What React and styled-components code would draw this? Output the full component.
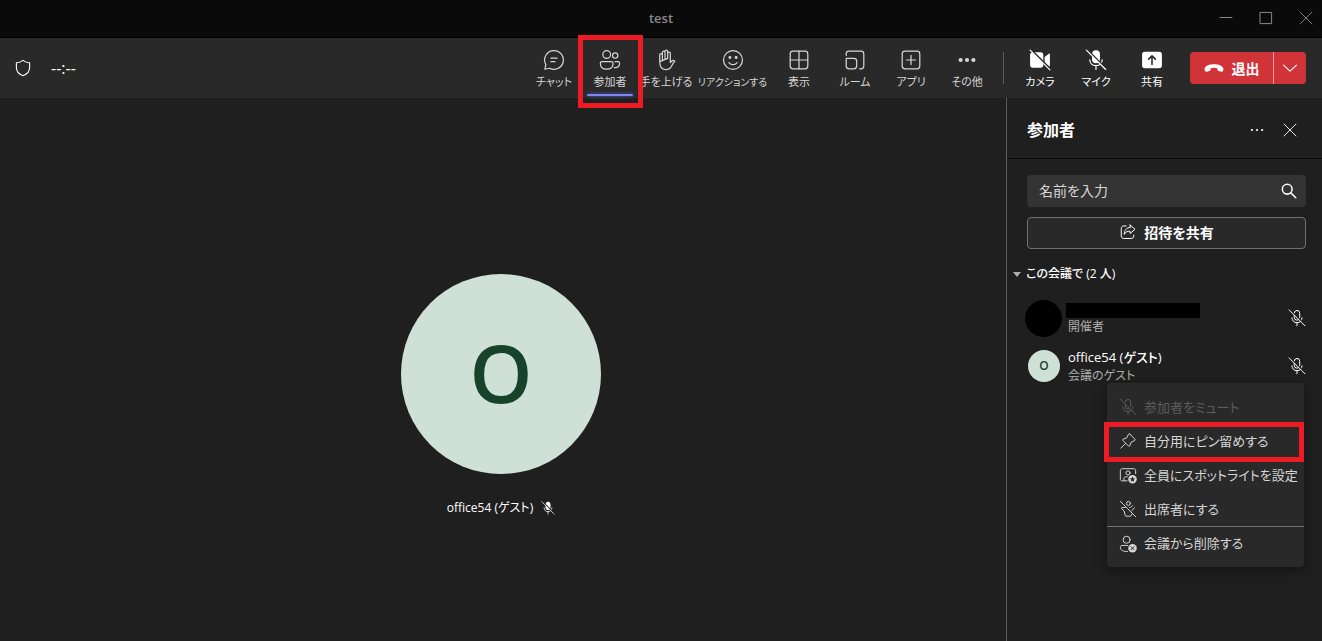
import React, { useState } from "react";
import styled, { createGlobalStyle } from "styled-components";

const GlobalStyle = createGlobalStyle`
  * {
    box-sizing: border-box;
  }

  body {
    margin: 0;
    background: #1f1f1f;
    color: #fff;
    font-family: "Open Sans", "Noto Sans CJK JP", sans-serif;
    font-feature-settings: "palt";
  }

  button,
  input {
    font: inherit;
    font-feature-settings: inherit;
    color: inherit;
  }

  button {
    padding: 0;
    border: none;
    background: none;
    cursor: pointer;
  }
`;

const Icon = ({ size = 20, children }) => (
  <svg
    width={size}
    height={size}
    viewBox="0 0 20 20"
    fill="none"
    stroke="currentColor"
    strokeWidth="1.1"
    strokeLinecap="round"
    strokeLinejoin="round"
    aria-hidden="true"
  >
    {children}
  </svg>
);

const ShieldIcon = () => (
  <Icon>
    <path d="M10 2.4C12 4 14.200 4.700 16.600 4.800V9.500C16.600 13.500 14.200 16.200 10 17.700C5.800 16.200 3.400 13.500 3.400 9.500V4.800C5.800 4.700 8 4 10 2.400Z" />
  </Icon>
);

const ChatIcon = () => (
  <Icon size={22}>
    <path d="M10 1.500A8.500 8.500 0 1 1 6 17.500L1.700 18.400L2.600 14.200A8.500 8.500 0 0 1 10 1.500Z" />
    <path d="M7.200 8.300H12.800M7.200 11.500H10.800" />
  </Icon>
);

const PeopleIcon = () => (
  <Icon size={22}>
    <circle cx="7" cy="5" r="3.500" />
    <circle cx="14.700" cy="6" r="2.400" />
    <path d="M2.700 11.400H11.300C12.200 11.400 12.800 12 12.800 12.900C12.800 16.500 10.500 18.300 7 18.300S1.200 16.500 1.200 12.900C1.200 12 1.800 11.400 2.700 11.400Z" />
    <path d="M14.600 11.400H17.200C18.100 11.400 18.700 12 18.700 12.900C18.700 15.700 16.900 17.300 13.900 16.900" />
  </Icon>
);

const HandIcon = () => (
  <Icon size={22}>
    <path d="M4.300 11.500V5.400A1.200 1.200 0 0 1 6.700 5.400V9.500M6.700 9V3.200A1.200 1.200 0 0 1 9.100 3.200V8.800M9.100 8.500V2.300A1.200 1.200 0 0 1 11.500 2.300V8.800M11.500 8.500V4A1.200 1.200 0 0 1 13.900 4V12.300L15.600 10.700C16.500 9.900 17.500 10.300 18 11.100C15.900 13.100 15.500 15.200 14.100 17C13.300 18.100 12.100 18.800 10.200 18.800C6 18.800 4.300 16.200 4.300 11.500Z" />
  </Icon>
);

const SmileIcon = () => (
  <Icon size={22}>
    <circle cx="10" cy="10" r="8.600" />
    <circle cx="7.200" cy="7.800" r=".8" fill="currentColor" />
    <circle cx="12.800" cy="7.800" r=".8" fill="currentColor" />
    <path d="M6.300 12.300C7.300 13.600 8.500 14.200 10 14.200S12.700 13.600 13.700 12.300" />
  </Icon>
);

const GridIcon = () => (
  <Icon size={22}>
    <rect x="2" y="2" width="16" height="16" rx="2.500" />
    <path d="M10 2V18M2 10H18" />
  </Icon>
);

const RoomsIcon = () => (
  <Icon size={22}>
    <path d="M2 5.800V4.500C2 3 3 2 4.500 2H15.500C17 2 18 3 18 4.500V15.500C18 17 17 18 15.500 18H14.200" />
    <path d="M2 8.500H9C10.500 8.500 11.500 9.500 11.500 11V15.500C11.500 17 10.500 18 9 18H4.500C3 18 2 17 2 15.500V8.500Z" />
  </Icon>
);

const AppsIcon = () => (
  <Icon size={22}>
    <rect x="2" y="2" width="16" height="16" rx="2.500" />
    <path d="M10 5.800V14.200M5.800 10H14.200" />
  </Icon>
);

const MoreIcon = ({ size = 22, r = 1.9, gap = 5.8 }) => (
  <Icon size={size}>
    <g fill="currentColor" stroke="none">
      <circle cx={10 - gap} cy="10" r={r} />
      <circle cx="10" cy="10" r={r} />
      <circle cx={10 + gap} cy="10" r={r} />
    </g>
  </Icon>
);

const CameraOffIcon = () => (
  <Icon size={22}>
    <g fill="currentColor" stroke="none">
      <path d="M3.500 3H10.500C12 3 13 4 13 5.500V14.500C13 16 12 17 10.500 17H3.500C2 17 1 16 1 14.500V5.500C1 4 2 3 3.500 3Z" />
      <path d="M14.200 7.200L18 4.300C18.500 4 19 4.200 19 4.800V15.200C19 15.800 18.500 16 18 15.700L14.200 12.800Z" />
    </g>
    <path d="M1.600 .6L19.400 18.400" stroke="#292929" strokeWidth="2" />
    <path d="M1 1L19 19" />
  </Icon>
);

const MicOffIcon = ({ size = 22, filled, cut = "#292929" }) => (
  <Icon size={size}>
    <rect x="7" y="1.600" width="6" height="10.800" rx="3" fill={filled ? "currentColor" : "none"} />
    <path d="M4.400 9.800C4.400 13 6.700 15.200 10 15.200S15.600 13 15.600 9.800M10 15.200V18.600" />
    <path d="M2 .6L19.400 18" stroke={cut} strokeWidth="1.600" />
    <path d="M1.200 1L18.800 18.600" />
  </Icon>
);

const ShareScreenIcon = () => (
  <Icon size={22}>
    <rect x="1" y="2.500" width="18" height="15" rx="2.500" fill="currentColor" stroke="none" />
    <path d="M10 14V6.200M6.900 9.200L10 6.100L13.100 9.200" stroke="#292929" strokeWidth="1.400" />
  </Icon>
);

const HangUpIcon = () => (
  <Icon>
    <path
      d="M10 6.300C14.500 6.300 18.200 7.600 19.200 10.100C19.700 11.400 19.400 12.500 18.800 13.300C18.500 13.700 18.100 13.800 17.600 13.700L14.600 13.100C14 13 13.700 12.600 13.600 12L13.200 10.200C11.200 9.500 8.800 9.500 6.800 10.200L6.400 12C6.300 12.600 6 13 5.400 13.100L2.400 13.700C1.900 13.800 1.500 13.700 1.200 13.300C.6 12.500 .3 11.400 .8 10.100C1.800 7.600 5.500 6.300 10 6.300Z"
      fill="currentColor"
      stroke="none"
    />
  </Icon>
);

const ChevronDownIcon = () => (
  <Icon size={16}>
    <path d="M2 6.500L10 14L18 6.500" strokeWidth="1.400" />
  </Icon>
);

const CloseIcon = ({ size = 14 }) => (
  <Icon size={size}>
    <path d="M1.500 1.500L18.500 18.500M18.500 1.500L1.500 18.500" strokeWidth="1.300" />
  </Icon>
);

const MinimizeIcon = () => (
  <Icon size={14}>
    <path d="M1.500 9.300H18.500" strokeWidth="1.400" />
  </Icon>
);

const MaximizeIcon = () => (
  <Icon size={14}>
    <rect x="2" y="2" width="16" height="16" strokeWidth="1.400" />
  </Icon>
);

const SearchIcon = () => (
  <Icon size={16}>
    <circle cx="7.800" cy="7.800" r="6.100" strokeWidth="1.900" />
    <path d="M12.300 12.300L18.500 18.500" strokeWidth="1.900" />
  </Icon>
);

const InviteIcon = () => (
  <Icon size={18}>
    <path d="M8 3.300H5.200C3.700 3.300 2.500 4.500 2.500 6V14.500C2.500 16 3.700 17.200 5.200 17.200H13.700C15.200 17.200 16.400 16 16.400 14.500V13.500" />
    <path d="M12.300 2.200L17.800 7L12.300 11.700V9.100C9.300 9 7.300 10.100 5.800 12.600C6 8.200 8.200 5.300 12.300 4.900Z" />
  </Icon>
);

const PinIcon = () => (
  <Icon size={18}>
    <path d="M12.200 2.500L17.500 7.800C18.100 8.400 17.900 9.300 17.200 9.600L13.400 11.500L12.100 15.300C11.900 16 11.100 16.100 10.600 15.600L4.400 9.400C3.900 8.900 4.100 8.100 4.700 7.900L8.500 6.600L10.400 2.800C10.700 2.100 11.600 1.900 12.200 2.500Z" />
    <path d="M7.300 12.700L2 18" />
  </Icon>
);

const SpotlightIcon = () => (
  <Icon size={18}>
    <path d="M9 16.500H3.500C2.300 16.500 1.500 15.700 1.500 14.500V5C1.500 3.800 2.300 3 3.500 3H16.500C17.700 3 18.500 3.800 18.500 5V8.500" />
    <circle cx="10" cy="7.700" r="2.300" />
    <path d="M5.500 16.300V13.700C5.500 12.700 6.200 12 7.200 12H9.200" />
    <circle cx="15" cy="14.700" r="4.700" fill="currentColor" stroke="none" />
    <path
      d="M15 11.700L15.900 13.700L18 13.900L16.400 15.300L16.900 17.400L15 16.300L13.100 17.400L13.600 15.300L12 13.900L14.100 13.700Z"
      fill="#292929"
      stroke="none"
    />
  </Icon>
);

const AttendeeIcon = () => (
  <Icon size={18}>
    <circle cx="10.500" cy="3.800" r="2.200" />
    <path d="M1.500 1.500L18.500 18.500" />
    <path d="M6.800 8.300H3.500C2.800 8.300 2.400 9.300 3 9.800L5.700 12.200L7 17.300C7.100 17.700 7.400 18 7.900 18H12.800C13.300 18 13.600 17.700 13.700 17.300L14.100 15.800M11.800 8.500C12.600 8.500 13.300 8.100 13.900 7.500L15.200 6.200M14.200 11.800L17.400 8.700" />
  </Icon>
);

const RemoveIcon = () => (
  <Icon size={18}>
    <circle cx="8.500" cy="5.300" r="3.900" />
    <path d="M9.500 18.300C4.600 18.700 1.500 16.800 1.500 13.500C1.500 12.300 2.300 11.600 3.300 11.600H9.500" />
    <circle cx="15" cy="14.700" r="4.700" fill="currentColor" stroke="none" />
    <path d="M13.300 13L16.700 16.400M16.700 13L13.300 16.400" stroke="#292929" />
  </Icon>
);

const tools = [
  { label: "チャット", icon: <ChatIcon /> },
  { label: "参加者", icon: <PeopleIcon />, active: true },
  { label: "手を上げる", icon: <HandIcon /> },
  { label: "リアクションする", icon: <SmileIcon />, wide: true },
  { label: "表示", icon: <GridIcon /> },
  { label: "ルーム", icon: <RoomsIcon /> },
  { label: "アプリ", icon: <AppsIcon /> },
  { label: "その他", icon: <MoreIcon /> },
];

const devices = [
  { label: "カメラ", icon: <CameraOffIcon /> },
  { label: "マイク", icon: <MicOffIcon filled /> },
  { label: "共有", icon: <ShareScreenIcon /> },
];

const menuItems = [
  { label: "参加者をミュート", icon: <MicOffIcon size={18} />, disabled: true },
  { label: "自分用にピン留めする", icon: <PinIcon />, marked: true },
  { label: "全員にスポットライトを設定", icon: <SpotlightIcon /> },
  { label: "出席者にする", icon: <AttendeeIcon /> },
  { label: "会議から削除する", icon: <RemoveIcon />, divided: true },
];

const App = () => {
  const [name, setName] = useState("");

  return (
    <Window>
      <GlobalStyle />

      <TitleBar>
        <span>test</span>
        <WindowButtons>
          <button type="button" aria-label="最小化">
            <MinimizeIcon />
          </button>
          <button type="button" aria-label="最大化">
            <MaximizeIcon />
          </button>
          <button type="button" aria-label="閉じる">
            <CloseIcon />
          </button>
        </WindowButtons>
      </TitleBar>

      <Toolbar>
        <Status>
          <ShieldIcon />
          <span>--:--</span>
        </Status>
        {tools.map((t) => (
          <ToolButton key={t.label} type="button" $wide={t.wide}>
            {t.icon}
            <span>{t.label}</span>
            {t.active && <Underline />}
            {t.active && <ToolMark />}
          </ToolButton>
        ))}
        <Separator />
        {devices.map((d) => (
          <ToolButton key={d.label} type="button" $bright>
            {d.icon}
            <span>{d.label}</span>
          </ToolButton>
        ))}
        <LeaveGroup>
          <LeaveButton type="button">
            <HangUpIcon />
            退出
          </LeaveButton>
          <LeaveMore type="button" aria-label="退出オプション">
            <ChevronDownIcon />
          </LeaveMore>
        </LeaveGroup>
      </Toolbar>

      <Content>
        <Stage>
          <Avatar $large>O</Avatar>
          <StageName>
            office54 (ゲスト)
            <MicOffIcon size={14} filled cut="#1f1f1f" />
          </StageName>
        </Stage>

        <Panel>
          <PanelHeader>
            <h2>参加者</h2>
            <button type="button" aria-label="その他のオプション">
              <MoreIcon size={16} r={1.4} gap={6.4} />
            </button>
            <button type="button" aria-label="パネルを閉じる">
              <CloseIcon />
            </button>
          </PanelHeader>

          <PanelTools>
            <SearchBox>
              <input
                type="text"
                aria-label="名前を入力"
                placeholder="名前を入力"
                value={name}
                onChange={(e) => setName(e.target.value)}
              />
              <SearchIcon />
            </SearchBox>
            <InviteButton type="button">
              <InviteIcon />
              招待を共有
            </InviteButton>
          </PanelTools>

          <GroupTitle type="button">
            <Triangle />
            この会議で (2 人)
          </GroupTitle>

          <People>
            <Person>
              <Avatar $hidden />
              <PersonText>
                <HiddenName />
                <Role>開催者</Role>
              </PersonText>
              <MicOffIcon size={18} cut="#1f1f1f" />
            </Person>
            <Person>
              <Avatar>O</Avatar>
              <PersonText>
                <PersonName>office54 (ゲスト)</PersonName>
                <Role>会議のゲスト</Role>
              </PersonText>
              <MicOffIcon size={18} cut="#1f1f1f" />
              <Menu>
                {menuItems.map((m) => (
                  <MenuItem key={m.label} type="button" disabled={m.disabled} $divided={m.divided}>
                    {m.icon}
                    <span>{m.label}</span>
                    {m.marked && <MenuMark />}
                  </MenuItem>
                ))}
              </Menu>
            </Person>
          </People>
        </Panel>
      </Content>
    </Window>
  );
};

const Window = styled.div`
  display: flex;
  flex-direction: column;
  min-height: 100vh;
`;

const TitleBar = styled.header`
  display: grid;
  grid-template-columns: 1fr auto 1fr;
  align-items: center;
  height: 38px;
  padding-bottom: 2px;
  border-bottom: 1px solid #000;
  background: #0a0a0a;
  color: #8a8a8a;
  font-size: 13px;
  font-weight: 600;

  > span {
    grid-column: 2;
  }
`;

const WindowButtons = styled.div`
  display: flex;
  justify-content: flex-end;
  gap: 26px;
  padding-right: 9px;

  button {
    display: flex;
  }
`;

const Toolbar = styled.nav`
  display: flex;
  align-items: center;
  height: 60px;
  padding: 0 16px 0 13px;
  background: #292929;
`;

const Status = styled.div`
  display: flex;
  align-items: center;
  gap: 18px;
  margin-right: auto;
  font-size: 16px;
`;

const ToolButton = styled.button`
  position: relative;
  display: flex;
  flex-direction: column;
  align-items: center;
  justify-content: center;
  gap: 3px;
  width: ${(p) => (p.$wide ? "77px" : "56px")};
  height: 60px;
  padding-top: 3px;
  color: ${(p) => (p.$bright ? "#fff" : "#d6d6d6")};
  font-size: ${(p) => (p.$wide ? "10px" : "11px")};
  line-height: 16px;
  white-space: nowrap;
`;

const Underline = styled.i`
  position: absolute;
  bottom: 2px;
  left: 5px;
  right: 5px;
  height: 2px;
  border-radius: 1px;
  background: #7f85f5;
  box-shadow: 0 0 4px #5b5fc7;
`;

const ToolMark = styled.i`
  position: absolute;
  z-index: 1;
  top: -3px;
  bottom: -10px;
  left: -4px;
  right: -5px;
  border: 5px solid #ed1c24;
`;

const Separator = styled.div`
  width: 1px;
  height: 32px;
  margin: 0 8px;
  background: #5c5c5c;
`;

const LeaveGroup = styled.div`
  display: flex;
  height: 32px;
  margin-left: 10px;
  border-radius: 4px;
  overflow: hidden;
  background: #d13438;
`;

const LeaveButton = styled.button`
  display: flex;
  align-items: center;
  justify-content: center;
  gap: 8px;
  width: 84px;
  border-right: 1px solid #e8a0a2;
  font-size: 14px;
  font-weight: 700;
`;

const LeaveMore = styled.button`
  display: flex;
  align-items: center;
  justify-content: center;
  width: 32px;
`;

const Content = styled.main`
  display: flex;
  flex: 1;
`;

const Stage = styled.section`
  display: flex;
  flex: 1;
  flex-direction: column;
  align-items: center;
  justify-content: center;
  gap: 24px;
  padding: 52px 4px 0 0;
`;

const Avatar = styled.div`
  display: flex;
  flex-shrink: 0;
  align-items: center;
  justify-content: center;
  width: ${(p) => (p.$large ? "200px" : p.$hidden ? "37px" : "32px")};
  height: ${(p) => (p.$large ? "200px" : p.$hidden ? "37px" : "32px")};
  margin: ${(p) => (p.$large || p.$hidden ? "0" : "0 2px 0 3px")};
  padding-bottom: ${(p) => (p.$large ? "4px" : "0")};
  border-radius: 50%;
  background: ${(p) => (p.$hidden ? "#000" : "#cfe1d7")};
  color: #17432b;
  font-size: ${(p) => (p.$large ? "80px" : "12px")};
  font-weight: 600;
  line-height: 1;
`;

const StageName = styled.div`
  display: flex;
  align-items: center;
  gap: 8px;
  font-size: 12px;
  line-height: 20px;
`;

const Panel = styled.aside`
  display: flex;
  flex-direction: column;
  width: 316px;
  border-left: 1px solid #5c5c5c;
`;

const PanelHeader = styled.div`
  display: flex;
  align-items: center;
  gap: 18px;
  height: 61px;
  padding: 4px 25px 0 20px;
  border-bottom: 1px solid #0a0a0a;

  h2 {
    margin: 0 auto 0 0;
    font-size: 16px;
    font-weight: 700;
    line-height: 24px;
  }

  button {
    display: flex;
  }
`;

const PanelTools = styled.div`
  display: flex;
  flex-direction: column;
  gap: 10px;
  padding: 16px 16px 13px 20px;
`;

const SearchBox = styled.label`
  display: flex;
  align-items: center;
  height: 32px;
  padding: 0 9px 0 12px;
  border-radius: 4px;
  background: #333;

  input {
    flex: 1;
    min-width: 0;
    padding: 0 0 2px;
    border: none;
    outline: none;
    background: none;
    font-size: 14px;
  }

  input::placeholder {
    color: #d6d6d6;
    opacity: 1;
  }
`;

const InviteButton = styled.button`
  display: flex;
  align-items: center;
  justify-content: center;
  gap: 7px;
  height: 32px;
  padding-bottom: 2px;
  border: 1px solid #707070;
  border-radius: 4px;
  background: #292929;
  font-size: 14px;
  font-weight: 700;
`;

const GroupTitle = styled.button`
  display: flex;
  align-items: center;
  gap: 5px;
  padding-left: 6px;
  font-size: 12px;
  font-weight: 500;
  line-height: 24px;
`;

const Triangle = styled.i`
  border: 4px solid transparent;
  border-top: 5px solid #adadad;
  border-bottom: 0;
`;

const People = styled.div`
  padding-top: 8px;
`;

const Person = styled.div`
  position: relative;
  display: flex;
  align-items: center;
  gap: 6px;
  height: 48px;
  padding: 0 16px 0 18px;
`;

const PersonText = styled.div`
  flex: 1;
`;

const PersonName = styled.div`
  font-size: 13px;
  font-weight: 500;
  line-height: 20px;
`;

const HiddenName = styled.div`
  width: 134px;
  height: 15px;
  margin: 3px 0 0 -2px;
  background: #000;
`;

const Role = styled.div`
  color: #adadad;
  font-size: 12px;
  line-height: 18px;
`;

const Menu = styled.div`
  position: absolute;
  top: 41px;
  right: 18px;
  width: 197px;
  padding: 7px 0;
  border-radius: 4px;
  background: #292929;
  box-shadow: 0 4px 12px rgba(0, 0, 0, 0.4);
`;

const MenuItem = styled.button`
  position: relative;
  display: flex;
  align-items: center;
  gap: 7px;
  width: 100%;
  height: 34px;
  padding-left: 12px;
  border-top: ${(p) => (p.$divided ? "1px solid #707070" : "none")};
  color: ${(p) => (p.disabled ? "#5c5c5c" : "#d6d6d6")};
  font-size: 13px;
  white-space: nowrap;

  span {
    padding-bottom: 2px;
  }
`;

const MenuMark = styled.i`
  position: absolute;
  top: -2px;
  bottom: -4px;
  left: -3px;
  right: 0;
  border: 5px solid #ed1c24;
`;

export default App;
